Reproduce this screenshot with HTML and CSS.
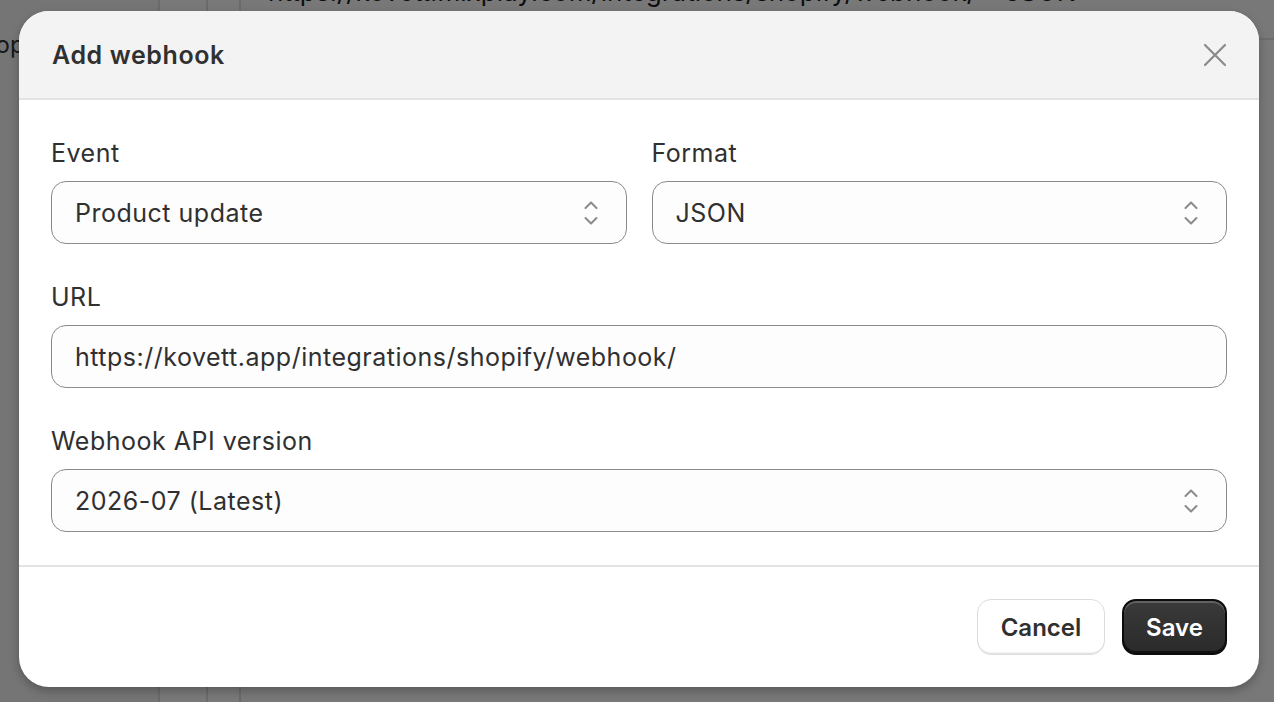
FILE: index.html
```html
<!DOCTYPE html>
<html lang="en">
<head>
  <meta charset="UTF-8">
  <meta name="viewport" content="width=device-width, initial-scale=1.0">
  <title>Add webhook</title>
  <link rel="stylesheet" href="styles.css">
</head>
<body>
  <!-- Page behind the modal -->
  <div class="page">
    <div class="page-side">
      <span class="side-text">Shop</span>
    </div>
    <div class="page-col narrow"></div>
    <div class="page-col thin"></div>
    <div class="page-main">
      <div class="page-row">https://kovett.mixplay.com/integrations/shopify/webhook/ • JSON</div>
      <div class="page-line"></div>
    </div>
  </div>
  <div class="backdrop"></div>

  <!-- Modal -->
  <div class="modal">
    <div class="modal-header">
      <h2>Add webhook</h2>
      <button class="close-btn" aria-label="Close">
        <svg width="24" height="24" viewBox="0 0 24 24">
          <path d="M2 2 L22 22 M22 2 L2 22" stroke="#8a8a8a" stroke-width="2.2" stroke-linecap="round" fill="none"/>
        </svg>
      </button>
    </div>

    <div class="modal-body">
      <div class="field-row">
        <div class="field">
          <label>Event</label>
          <div class="select">
            <span>Product update</span>
            <svg class="chevron" width="16" height="26" viewBox="0 0 16 26">
              <path d="M2.5 8 L8 2.5 L13.5 8 M2.5 18 L8 23.5 L13.5 18" stroke="#8a8a8a" stroke-width="2" stroke-linecap="round" stroke-linejoin="round" fill="none"/>
            </svg>
          </div>
        </div>
        <div class="field">
          <label>Format</label>
          <div class="select">
            <span>JSON</span>
            <svg class="chevron" width="16" height="26" viewBox="0 0 16 26">
              <path d="M2.5 8 L8 2.5 L13.5 8 M2.5 18 L8 23.5 L13.5 18" stroke="#8a8a8a" stroke-width="2" stroke-linecap="round" stroke-linejoin="round" fill="none"/>
            </svg>
          </div>
        </div>
      </div>

      <div class="field">
        <label>URL</label>
        <div class="select">
          <span>https://kovett.app/integrations/shopify/webhook/</span>
        </div>
      </div>

      <div class="field">
        <label>Webhook API version</label>
        <div class="select">
          <span>2026-07 (Latest)</span>
          <svg class="chevron" width="16" height="26" viewBox="0 0 16 26">
            <path d="M2.5 8 L8 2.5 L13.5 8 M2.5 18 L8 23.5 L13.5 18" stroke="#8a8a8a" stroke-width="2" stroke-linecap="round" stroke-linejoin="round" fill="none"/>
          </svg>
        </div>
      </div>
    </div>

    <div class="modal-footer">
      <button class="btn btn-secondary">Cancel</button>
      <button class="btn btn-primary">Save</button>
    </div>
  </div>
</body>
</html>
```

FILE: styles.css
```css
/* Reset */
* {
  margin: 0;
  padding: 0;
  box-sizing: border-box;
}

body {
  font-family: 'Inter', 'Noto Sans', sans-serif;
  color: #303030;
  width: 1274px;
  height: 702px;
  overflow: hidden;
  position: relative;
  background-color: #f1f1f1;
}

/* Page behind */
.page {
  display: flex;
  height: 100%;
}

.page-side {
  width: 160px;
  background-color: #ebebeb;
  border-right: 2px solid #d6d6d6;
  padding-top: 30px;
  overflow: hidden;
}

.side-text {
  display: block;
  font-size: 24px;
  margin-left: -34px;
  color: #303030;
}

.page-col {
  border-right: 2px solid #d6d6d6;
  background-color: #f3f3f3;
}

.page-col.narrow { width: 48px; }
.page-col.thin { width: 33px; }

.page-main {
  flex: 1;
  padding-left: 27px;
}

.page-row {
  font-size: 26px;
  color: #1a1a1a;
  margin-top: -24px;
  white-space: nowrap;
}

.page-line {
  margin-top: 31px;
  margin-left: -27px;
  border-top: 2px solid #d8d8d8;
}

.backdrop {
  position: absolute;
  inset: 0;
  background-color: rgba(0, 0, 0, 0.5);
}

/* Modal */
.modal {
  position: absolute;
  left: 19px;
  top: 11px;
  width: 1240px;
  height: 676px;
  background-color: #ffffff;
  border-radius: 30px;
  overflow: hidden;
  display: flex;
  flex-direction: column;
  box-shadow: 0 4px 10px rgba(0, 0, 0, 0.25);
}

.modal-header {
  height: 89px;
  background-color: #f3f3f3;
  border-bottom: 2px solid #e3e3e3;
  display: flex;
  align-items: center;
  justify-content: space-between;
  padding: 0 32px 0 33px;
}

.modal-header h2 {
  font-size: 25px;
  font-weight: 600;
  letter-spacing: 0.6px;
  color: #303030;
  margin-top: 1px;
}

.close-btn {
  border: none;
  background: none;
  width: 24px;
  height: 24px;
  display: flex;
  cursor: pointer;
}

.modal-body {
  padding: 35px 32px 33px 32px;
  border-bottom: 2px solid #e3e3e3;
  display: flex;
  flex-direction: column;
  gap: 35px;
}

.field-row {
  display: flex;
  gap: 25px;
}

.field-row .field {
  flex: 1;
}

.field label {
  display: block;
  font-size: 25px;
  line-height: 36px;
  letter-spacing: 0.5px;
  color: #303030;
  margin-bottom: 10px;
}

.select {
  height: 63px;
  border: 1.5px solid #8a8a8a;
  border-radius: 15px;
  background-color: #fdfdfd;
  display: flex;
  align-items: center;
  justify-content: space-between;
  padding: 0 27px 0 23px;
  font-size: 25px;
  letter-spacing: 0.5px;
  color: #303030;
}

.chevron {
  flex-shrink: 0;
}

/* Footer */
.modal-footer {
  flex: 1;
  display: flex;
  justify-content: flex-end;
  align-items: center;
  gap: 17px;
  padding: 0 32px;
}

.btn {
  font-family: 'Inter', 'Noto Sans', sans-serif;
  height: 56px;
  border-radius: 14px;
  font-size: 24px;
  font-weight: 600;
  cursor: pointer;
  padding: 0 20px;
}

.btn-secondary {
  width: 128px;
  background-color: #ffffff;
  color: #303030;
  border: 1.5px solid #dcdcdc;
  box-shadow: 0 -1.5px 0 #e6e6e6 inset;
}

.btn-primary {
  width: 105px;
  background: linear-gradient(#3a3a3a, #2a2a2a);
  color: #ffffff;
  border: 2px solid #0c0c0c;
  box-shadow: inset 0 2px 0 rgba(255, 255, 255, 0.2), inset 0 -2px 0 rgba(0, 0, 0, 0.6);
}
```
